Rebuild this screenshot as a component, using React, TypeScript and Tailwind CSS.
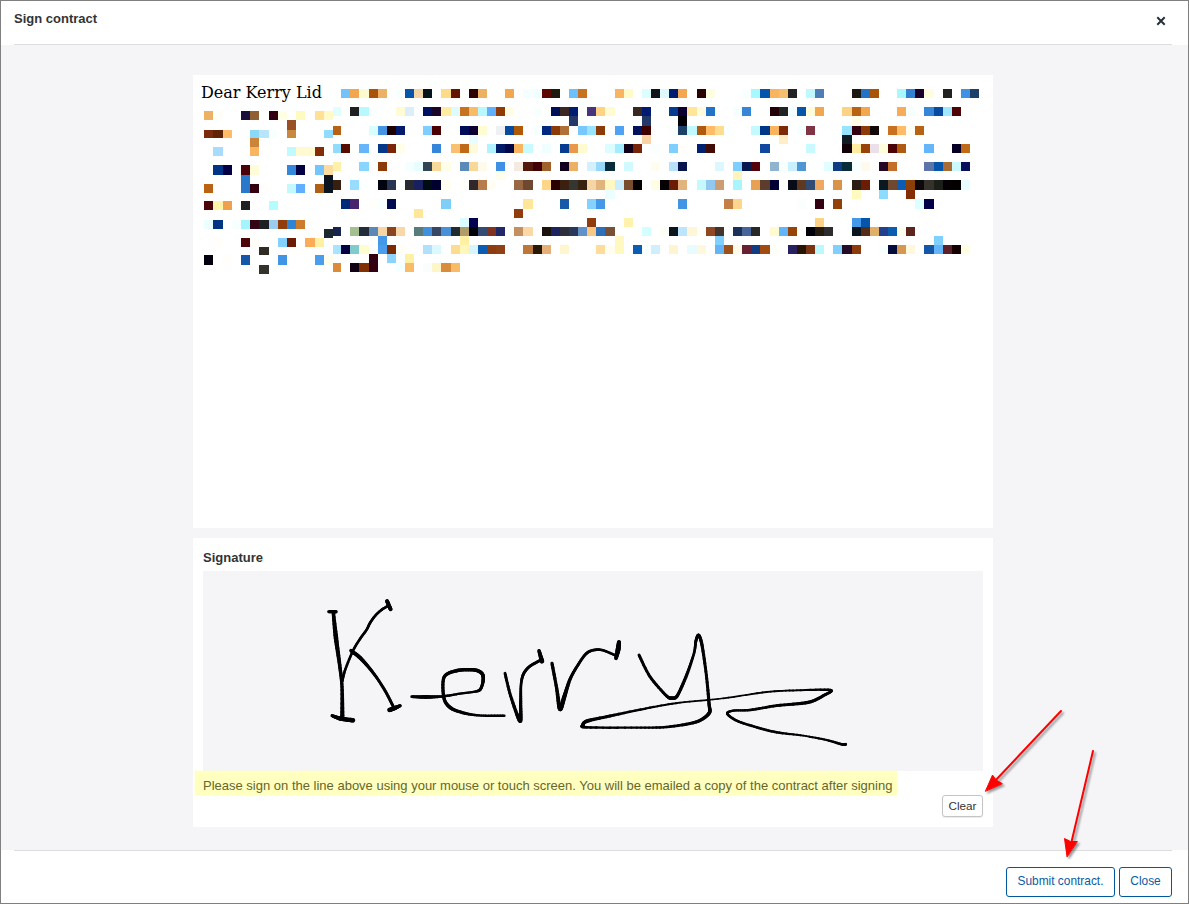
import React from "react";

type Point = [number, number, number];

/* Redacted letter text: "y height | column colours, column colours ..." */
const leftEdges = [11, 20, 30, 39, 48, 57, 66, 76, 85, 94, 103, 112, 122, 131, 140];
const leftBlocks: [number, number, string][] = [
  [36, 45, "0 ecb163 fffef8;4 181038 906034;7 320010 ffffe4;10 fffac0;12 ffe094 fffac8"],
  [45, 55, "9 985024"],
  [55, 63, "0 7c2a0c 602404 ffbb68;5 8cd8f8 b8e4fc f8ffff;9 c88840;13 90dcff"],
  [63, 72, "5 cc8438"],
  [72, 81, "1 a8dcff;5 f9b460;9 c0faff fffad0 fffad0 842c08"],
  [90, 100, "1 003484 040044;4 4c0008 fffcd8;9 3488dc 040044;12 74c4ff fddca0"],
  [100, 109, "4 2878cc;13 0c1420"],
  [109, 118, "0 b86414;4 2878cc 340010 fffefa;9 c4f8ff 60b0ff;12 b06014 0c1420"],
  [126, 135, "0 4c0408 fff4a8 f0a04c;4 202020;7 b4fcff"],
  [145, 154, "0 ecffff 003484;3 f8ffff a4f4ff 320414 1c2020 9cccf0 903c0c 3084d4 cc7c2c"],
  [154, 163, "13 1c2830"],
  [163, 172, "1 fffefa;4 4c0408 fffef8;8 84d0ff 6c1c04;11 fcac58 fff0a4"],
  [172, 180, "6 302c24"],
  [180, 190, "0 040010;2 fffefa;4 1456a8;8 4294e4;12 4a9cec fffeec"],
  [190, 199, "6 34322c"],
];

const rightEdges = Array.from({ length: 73 }, (_, k) => (k === 0 ? 140 : Math.floor(139.58 + 9.113 * k)));
const rightBlocks: [number, number, string][] = [
  [14, 23, "1 73c2fa f3a650 fdfad0 a85308 ecb163;7 f8ffff 0555aa f2d4a8 05141a;12 fedb88 641500;15 2a0000 ecb163;19 f3a650;21 f5ffff effefe 5c0800 1d1a12;26 6cc0ff c87220;31 f9b460 fffac8;34 dcfefe 12121a dffaff 001c70 f6a650;40 2d0000 fffde0;45 f8ffff a8f8ff 0555aa f9b460 f6bf70 222222;52 bff8ff 4f7db5;57 1c1812 2272c8 a85308;62 a8f8ff 3080d4 180028 fffddc;67 202220;69 4090e4 1d4068"],
  [32, 41, "0 dffefe;2 202020 b8f8ff f9ffff;7 fffcd4 dceefc;10 001060 1a0428 ffeca0 dcfcff c87220 f9bb68 b8f8ff 60b0ff 903a08 fffee4;22 f8ffff;24 001058 38281f 001c70;28 48347c ffd284 fffcd4;33 38281f 001c70;37 053c90 0c0030 ffe698 fffcdc 2272c8;44 f4ffff 3585d8;48 220008 202422 f4ffff 0555aa fffdd8 f3a650;56 fcd284 b86214 f3a650;62 f9ac58 f5ffff;65 3585d8 084aa0 a0e8ff 4e0404"],
  [41, 51, "26 223868;34 223868;38 000004;57 fffde8"],
  [51, 60, "0 b86214;4 d8fefe 4594e4 1c0000 041a6c;10 7dcfff 4a0000;14 000c58 0c0030 fffcd4;18 eef0f2 084aa0 b05a08;22 f8ffff 002880 8c3a08 b07038;27 78c8ff 98e4ff 8c3a08;31 50a2f4;33 00125c 400000;37 fafefe 1c4068 bff8ff b05a10 ffbb68 ffdd90 faffff;46 c4faff 003888 f9b460 7c2a08;51 f4ffff 803444;56 98e4ff 320010 8c3a08 120808;61 c87220 ffbb68 fffdf0 b86214"],
  [60, 69, "15 e8fdff;34 f8d2a4;49 ffeec8;56 101c24"],
  [69, 78, "0 90dcff 580c00;3 64b6f8;5 053888 7c2408 fffeea;11 3585d8;13 f8c070 c06a18 fffadc;17 b0f2ff 001c68 000848 f9b460 c8faff;23 f0feff;25 053c90 e89848 fffad0;30 dcfcff a4ecff 100018 782408;35 fafefe;37 7dcfff fffefa;40 002070 420c04;47 1048a0;52 c8faff;56 120008 ffeca0 984408 ece0e8 fffddc 4a0408 b05a10;65 64b6f8;68 080024 c06a18"],
  [87, 96, "0 fff2a8;3 88d6ff;5 8c3a08;8 f4ffff e8fdff 324454 f6d898 fffee8;14 5c8ab8 f8d898 fffbec;18 3d90e4;20 f5eae0 52180c 420004 a0622a;25 100020 ecb163;28 d4f0ff 98d8f8 082c3c;32 d0faff;35 fffdf0;37 b8e0f8 08144c;42 dcf8ff;44 7dcfff 08184c 540408;48 90b4d0 f8ffff c8f0ff 5096d4;54 e0fdff 103c84 082c38 f8ffff fffaec;60 240824 c4702a;65 5c74a8 0555aa a86c34 ccf8ff 08105c"],
  [96, 105, "18 fffeec;44 fff4bc"],
  [105, 115, "0 382010;2 98dcff fbffff;5 000410 283450;8 282a30 182060 000c14 000030 fffef0;14 fefefa 302828 b87c4c fffdf4;20 986844 704830;23 ffd688 2a0000 3c200f 343630 38220f f6d4a4 e0b47c fff8c0 ccecff 784c2c 000000;35 fffde4 040004 6c1c04 e0b47c;40 c4faff 90c8f0 cc9c74;44 a8f4ff;46 e8a055 5c3c2c 000034;50 080c18 603820 304c74 f0a860;55 d8924a;57 2c1c16 6c1c04;60 0c181f 704830 0c5cb4 8c4008 0c080c 34322a 1c1e1a 040004 050000 e8fdff"],
  [115, 124, "30 ecfeff;57 fffac0;60 8cdcff;63 842c04"],
  [124, 134, "1 002878 48246c;4 fefefa f8ffff 000c50;12 7dcff8;21 ffe698;25 1858a8;28 84d0ff 4598e8;38 4294e4;43 c48044 ffd48c;51 fafefe;53 320010;55 904008;64 dffeff 040048"],
  [134, 143, "9 ffe698;20 903c0c"],
  [143, 152, "14 dcfdff 040050;28 903c0c;32 fff2ac;53 fcd284;57 4598e8 0555aa"],
  [152, 161, "0 182450;2 a4c090 242c3c 5c88b8 f6d6a4 8c4420 f8d8a8;9 587c7c 4090e0 384864 4890d8 202c30 b09c68 000008 344c74 803420 202868 fefefa c49060 fcd8a4;23 1c120c 1c2460 2c2e3c 283858 6090c8 f8c884 2c70bc 785034;33 fefefa d4feff;36 fefef8 0a161e bce4fc fff6d8 fefefa 904824 44322c;44 1a3258 44649a 282828;48 fffad0 64b4f8 984408;52 020008 241a10 2c2c2c;57 0a161e 542c1c e0b068 24408a 0c5cb0 fffeec 5c241c"],
  [161, 170, "5 4598e8;14 fff0a4;31 fff8c0;42 80d0ff;66 80d0ff"],
  [170, 179, "0 a8e4ff 040044 80cccc fffdd0;5 4a9cec 7c2a04 fffef4;10 b0e0fc dcf8ff;13 fcdc90 fff6bc d8f4ff 0c5cb4 8c3c10 904014;21 bc7838 281804 e4b078;25 fff6d0;29 fddc9c fffef0 fff8c0;33 0c5cb4 f8ffff d0eefc;37 fff4d0;39 e8fcff fff8dc;42 64b4f8 9c501c fffbe8 682034 103c84 a04c10 fefef8;50 282060 281404 7c3410 bcf8ff;55 80d0ff 240c28 8c3c0c;60 f8ffff 040c3c d49850 fff8dc;65 1456a8 64b4f8 5c2028 140000 fffee0"],
  [179, 188, "4 320010;6 8cd4ff fafefe fff0a4"],
  [188, 197, "0 dc8c38;2 120014 803004 320010;7 f4ffff f9bb68;10 fafefa fff6c8 d88c3c f9bb68"],
];

function Blocks({ rows, edges }: { rows: [number, number, string][]; edges: number[] }) {
  return (
    <>
      {rows.flatMap(([top, bottom, runs]) =>
        runs.split(";").flatMap((run) => {
          const [start, ...colours] = run.split(" ");
          return colours.map((c, i) => {
            const col = Number(start) + i;
            return (
              <rect
                key={`${top}-${col}`}
                x={edges[col]}
                y={top}
                width={edges[col + 1] - edges[col]}
                height={bottom - top}
                fill={`#${c}`}
              />
            );
          });
        }),
      )}
    </>
  );
}

/* Pen stroke through the points, with a width that varies along it. */
function Stroke({ points }: { points: Point[] }) {
  const out: Point[] = [points[0]];
  const steps = 8;
  for (let i = 0; i < points.length - 1; i++) {
    const p0 = points[Math.max(0, i - 1)];
    const p1 = points[i];
    const p2 = points[i + 1];
    const p3 = points[Math.min(points.length - 1, i + 2)];
    for (let s = 1; s <= steps; s++) {
      const t = s / steps;
      const at = (k: 0 | 1) => {
        const m1 = (p2[k] - p0[k]) * 0.45;
        const m2 = (p3[k] - p1[k]) * 0.45;
        return (
          (2 * t ** 3 - 3 * t ** 2 + 1) * p1[k] +
          (t ** 3 - 2 * t ** 2 + t) * m1 +
          (-2 * t ** 3 + 3 * t ** 2) * p2[k] +
          (t ** 3 - t ** 2) * m2
        );
      };
      out.push([at(0), at(1), p1[2] + (p2[2] - p1[2]) * t]);
    }
  }
  return (
    <>
      {out.slice(1).map((p, i) => (
        <line key={i} x1={out[i][0]} y1={out[i][1]} x2={p[0]} y2={p[1]} strokeWidth={p[2] + 0.7} />
      ))}
    </>
  );
}

const firstLetters: Point[][] = [
  [[56, 65, 8], [78, 65, 10]],
  [[70, 68, 9], [78, 145, 13], [89, 225, 10], [96, 290, 9], [97, 383, 12]],
  [[66, 377, 8], [92, 386, 12], [129, 391, 13]],
  [[96, 275, 8], [106, 238, 7], [130, 180, 7], [150, 147, 7], [170, 119, 7], [180, 99, 7], [195, 78, 7], [214, 60, 7], [237, 46, 7]],
  [[231, 33, 11], [242, 58, 11]],
  [[123, 182, 10], [150, 203, 11], [178, 234, 9], [203, 267, 8], [228, 307, 8], [250, 350, 8]],
  [[238, 360, 12], [255, 354, 12], [271, 347, 8]],
  [[305, 320, 7], [350, 321, 11], [400, 319, 7], [450, 311, 6], [495, 305, 6], [511, 298, 8], [519, 275, 9], [517, 252, 10], [494, 240, 10], [440, 242, 10], [402, 262, 9], [402, 325, 9], [424, 355, 10], [470, 371, 8], [520, 377, 6], [583, 377, 7]],
  [[585, 250, 8], [602, 318, 8], [630, 393, 11], [632, 340, 9], [633, 285, 7], [640, 253, 8], [658, 230, 8], [692, 210, 8]],
  [[687, 182, 9], [696, 214, 13]],
];

const lastLetters: Point[][] = [
  [[-54, 220, 9], [-40, 295, 9], [-30, 357, 12], [-17, 320, 12], [0, 268, 9], [22, 228, 8], [52, 188, 8], [90, 179, 7], [134, 195, 7]],
  [[147, 156, 11], [144, 180, 14], [138, 205, 10]],
  [[207, 195, 8], [240, 260, 8], [289, 317, 8], [305, 324, 9], [322, 317, 9], [350, 255, 9], [372, 190, 7], [378, 152, 8], [386, 136, 9], [396, 165, 9], [409, 255, 8], [417, 340, 9], [417, 370, 10], [378, 396, 9], [290, 411, 7], [200, 413, 6], [50, 412, 7], [39, 405, 9], [52, 393, 10], [120, 378, 8], [240, 353, 6], [330, 338, 5], [460, 325, 4], [590, 306, 5], [680, 301, 5], [781, 300, 7], [762, 316, 8], [715, 337, 9], [620, 347, 8], [540, 360, 7], [490, 362, 6], [472, 371, 7], [500, 392, 7], [560, 412, 7], [620, 427, 7], [700, 437, 5], [770, 450, 6], [815, 463, 7], [827, 463, 8]],
];

export default function App() {
  return (
    <div className="relative flex h-[904px] w-[1189px] flex-col border border-[#808080] bg-white font-['Liberation_Sans',Arial,sans-serif] text-[13px] text-[#333333]">
      <header className="mr-4 ml-[13px] flex h-11 shrink-0 items-start justify-between border-b border-[#dddddf]">
        <h1 className="mt-[10px] text-[13px] leading-4 font-bold">Sign contract</h1>
        <button aria-label="Close dialog" className="mt-[15px] mr-[6px] text-[#26303c]">
          <svg width="10" height="10" viewBox="0 0 10 10" fill="none" stroke="currentColor" strokeWidth="2">
            <path d="M1.3 1.3L8.7 8.7M8.7 1.3L1.3 8.7" />
          </svg>
        </button>
      </header>

      <main className="flex h-[805px] shrink-0 flex-col gap-[10px] bg-[#f5f5f8] pt-[30px] pl-[192px]">
        <section className="relative h-[453px] w-[800px] shrink-0 bg-white">
          <p className="pt-2 pl-2 font-['DejaVu_Serif',serif] text-[16px] leading-5 whitespace-nowrap text-black">
            Dear Kerry Lid
          </p>
          <svg className="absolute top-0 left-0" width="800" height="453" shapeRendering="crispEdges">
            <Blocks rows={leftBlocks} edges={leftEdges} />
            <Blocks rows={rightBlocks} edges={rightEdges} />
          </svg>
        </section>

        <section className="flex h-[289px] w-[800px] shrink-0 flex-col bg-white px-[10px] pt-3">
          <h2 className="h-[21px] text-[13px] leading-4 font-bold">Signature</h2>
          <div className="h-[200px] w-[780px] shrink-0 bg-[#f5f5f8]">
            <svg width="780" height="200" viewBox="0 0 780 200" stroke="#000" fill="none" strokeLinecap="round">
              <g transform="translate(107 19) scale(0.33333)">
                {firstLetters.map((points, i) => (
                  <Stroke key={i} points={points} />
                ))}
              </g>
              <g transform="translate(367 19) scale(0.33333)">
                {lastLetters.map((points, i) => (
                  <Stroke key={i} points={points} />
                ))}
              </g>
            </svg>
          </div>
          <p className="-ml-2 h-6 w-[702px] shrink-0 bg-[#ffffc0] pl-2 leading-[29px] whitespace-nowrap text-[#66662c] shadow-[0_0_2px_#ffffc0]">
            Please sign on the line above using your mouse or touch screen. You will be emailed a copy of the contract after signing
          </p>
          <button className="flex h-[22px] w-[41px] items-center justify-center self-end rounded-[3px] border border-[#c4c4c4] bg-white text-[11.7px] text-[#333333] shadow-[0_1px_1px_rgba(0,0,0,0.08)]">
            Clear
          </button>
        </section>
      </main>

      <footer className="mr-4 ml-[13px] flex flex-1 items-start justify-end gap-1 pt-[17px] text-[11.9px] text-[#0a5ba3]">
        <button className="h-[30px] w-[109px] rounded-[3px] border border-[#0058a0] bg-white">Submit contract.</button>
        <button className="h-[30px] w-[53px] rounded-[3px] border border-[#0058a0] bg-white">Close</button>
      </footer>
      <hr className="absolute top-[849px] right-4 left-[13px] border-[#dddddf]" />

      <svg
        className="pointer-events-none absolute top-[699px] left-[975px] drop-shadow-[2px_2px_1px_rgba(0,0,0,0.4)]"
        width="130"
        height="165"
        viewBox="976 700 130 165"
        fill="#ff0000"
        stroke="#ff0000"
        strokeLinecap="round"
      >
        <path d="M1061 711L994 782M1093 751L1071 844" strokeWidth="2" />
        <path d="M985.5 791L992.5 775L996 780L1002 783.5ZM1067 856.5L1064.5 838.5L1070.5 841.5L1077 841.5Z" strokeWidth="1" />
      </svg>
    </div>
  );
}
